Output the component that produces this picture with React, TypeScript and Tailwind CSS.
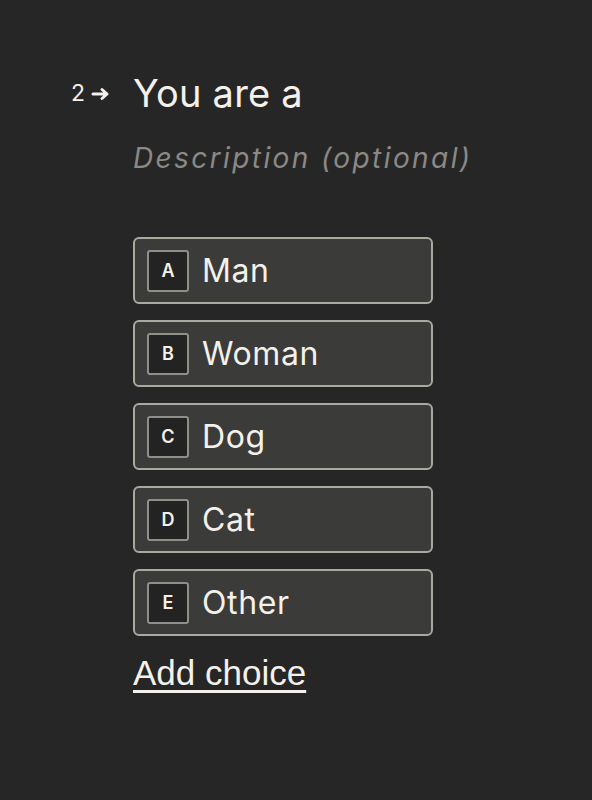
const CHOICES = [
  { key: "A", label: "Man" },
  { key: "B", label: "Woman" },
  { key: "C", label: "Dog" },
  { key: "D", label: "Cat" },
  { key: "E", label: "Other" },
];

export default function App() {
  return (
    <div className="min-h-[800px] w-full bg-[#262626] font-['Inter',sans-serif] text-[#f4f1ea]">
      <div className="flex pl-[71px] pt-[70px]">
        {/* Question number */}
        <div className="flex w-[62px] shrink-0 items-center gap-[6px] self-start pt-[12px]">
          <span className="text-[23px] leading-none">2</span>
          <svg width="19" height="14" viewBox="0 0 19 14" fill="none" stroke="currentColor" strokeWidth="3" strokeLinecap="round" strokeLinejoin="round">
            <path d="M2 7h14M11 2.5l5 4.5-5 4.5" />
          </svg>
        </div>

        <div className="flex flex-col">
          <h1 className="text-[38px] leading-[46px] tracking-[0.2px]">You are a</h1>
          <p className="mt-[24px] text-[28px] italic leading-[36px] tracking-[2.4px] text-[#8a8984]">
            Description (optional)
          </p>

          {/* Choices */}
          <div className="mt-[61px] flex flex-col gap-[16px]">
            {CHOICES.map((c) => (
              <div
                key={c.key}
                className="flex h-[67px] w-[300px] items-center gap-[13px] rounded-[6px] border-2 border-[#a9a9a2] bg-[#3b3b3a] pl-[12px]"
              >
                <div className="flex h-[42px] w-[42px] items-center justify-center rounded-[3px] border-2 border-[#8f8f8a] bg-[#232323] text-[18px] font-semibold">
                  {c.key}
                </div>
                <span className="text-[32px] leading-none tracking-[0.6px]">{c.label}</span>
              </div>
            ))}
          </div>

          <button className="mt-[17px] self-start font-['Liberation_Sans',sans-serif] text-[35px] leading-[40px] underline decoration-[3px] underline-offset-[5px]">
            Add choice
          </button>
        </div>
      </div>
    </div>
  );
}
